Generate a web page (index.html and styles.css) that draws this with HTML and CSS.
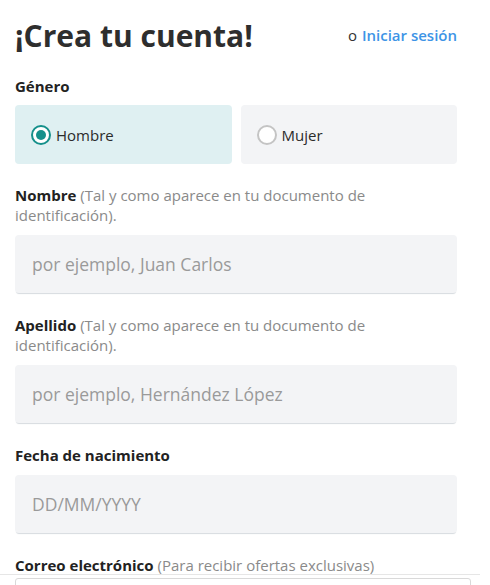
FILE: index.html
```html
<!DOCTYPE html>
<html lang="es">
<head>
    <meta charset="UTF-8">
    <meta name="viewport" content="width=device-width, initial-scale=1.0">
    <title>Crea tu cuenta</title>
    <link rel="stylesheet" href="styles.css">
</head>
<body>

<div class="container">
    <div class="header">
        <h1>¡Crea tu cuenta!</h1>
        <span class="login-link">o <a href="#">Iniciar sesión</a></span>
    </div>

    <form id="signupForm" onsubmit="event.preventDefault();">
        <div class="field gender-field">
            <div class="label">Género</div>
            <div class="gender">
                <label class="gender-option selected">
                    <input type="radio" name="gender" value="h" checked>
                    <span class="radio"></span>
                    Hombre
                </label>
                <label class="gender-option">
                    <input type="radio" name="gender" value="m">
                    <span class="radio"></span>
                    Mujer
                </label>
            </div>
        </div>

        <div class="field">
            <label class="label" for="name">Nombre <span class="hint">(Tal y como aparece en tu documento de identificación).</span></label>
            <input type="text" class="input-field" id="name" placeholder="por ejemplo, Juan Carlos">
        </div>

        <div class="field">
            <label class="label" for="lastname">Apellido <span class="hint">(Tal y como aparece en tu documento de identificación).</span></label>
            <input type="text" class="input-field" id="lastname" placeholder="por ejemplo, Hernández López">
        </div>

        <div class="field">
            <label class="label" for="birth">Fecha de nacimiento</label>
            <input type="text" class="input-field" id="birth" placeholder="DD/MM/YYYY">
        </div>

        <div class="field">
            <label class="label" for="email">Correo electrónico <span class="hint">(Para recibir ofertas exclusivas)</span></label>
            <input type="email" class="input-field" id="email" placeholder="">
        </div>
    </form>
</div>

<div class="footer-bar">
    <div class="footer-box"></div>
</div>

</body>
</html>
```

FILE: styles.css
```css
body {
    font-family: "Open Sans", Arial, sans-serif;
    background-color: #fff;
    margin: 0;
    color: #2b2b2b;
}
.container {
    width: 442px;
    padding: 0 15px;
}
.header {
    display: flex;
    justify-content: space-between;
    align-items: center;
    height: 71px;
}
h1 {
    font-size: 30px;
    font-weight: 700;
    margin: 0;
    color: #2e2e2e;
}
.login-link {
    font-size: 15px;
    color: #333;
    margin-top: -2px;
}
.login-link a {
    color: #3d94e6;
    font-weight: 600;
    text-decoration: none;
    margin-left: 1px;
}
.field {
    margin-bottom: 22px;
}
.label {
    display: block;
    font-size: 15px;
    line-height: 20px;
    font-weight: 700;
    color: #222;
    margin-bottom: 10px;
}
.gender-field {
    margin-bottom: 21px;
}
.gender-field .label {
    margin-top: 5px;
    margin-bottom: 9px;
}
.hint {
    font-weight: 400;
    color: #8a8a8a;
}
.gender {
    display: flex;
    gap: 9px;
}
.gender-option {
    flex: 1;
    display: flex;
    align-items: center;
    height: 59px;
    padding: 0 16px;
    border-radius: 4px;
    background-color: #f3f4f6;
    font-size: 15px;
    color: #2b2b2b;
    cursor: pointer;
}
.gender-option.selected {
    background-color: #dff0f2;
}
.gender-option input {
    display: none;
}
.radio {
    width: 16px;
    height: 16px;
    border: 2px solid #c4c4c4;
    border-radius: 50%;
    background-color: #fff;
    margin-right: 5px;
    position: relative;
}
.selected .radio {
    border-color: #15908b;
}
.selected .radio::after {
    content: "";
    position: absolute;
    top: 3px;
    left: 3px;
    width: 10px;
    height: 10px;
    border-radius: 50%;
    background-color: #15908b;
}
.input-field {
    display: block;
    width: 100%;
    box-sizing: border-box;
    height: 58px;
    padding: 0 17px;
    border: none;
    border-radius: 4px;
    background-color: #f3f4f6;
    box-shadow: 0 2px 1px -1px #d6dbdf;
    font-family: "Open Sans", Arial, sans-serif;
    font-size: 17.5px;
    color: #333;
    outline: none;
}
.input-field::placeholder {
    color: #9a9a9a;
}
.footer-bar {
    position: fixed;
    left: 0;
    right: 10px;
    bottom: 0;
    height: 7px;
    background-color: #fff;
    border-top: 1px solid #e6e6e6;
    padding: 3px 0 0 15px;
}
.footer-box {
    width: 454px;
    height: 20px;
    border: 1px solid #d9d9d9;
    border-radius: 3px;
}
```
